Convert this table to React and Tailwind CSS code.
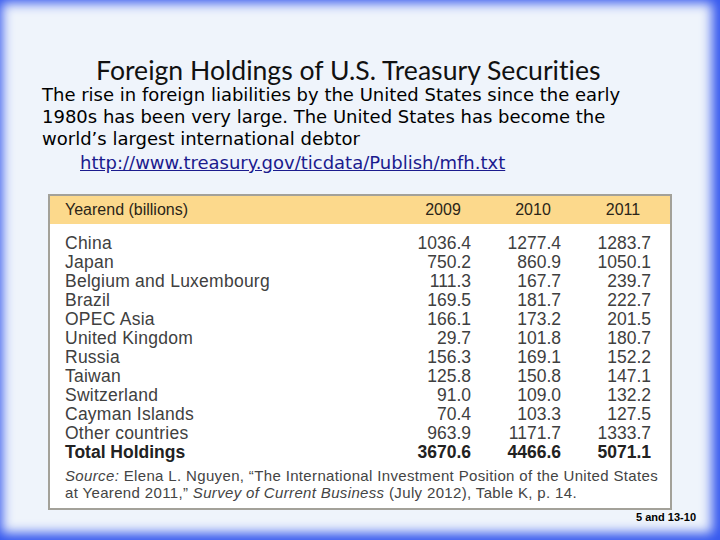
import React from "react";

const rows = [
  ["China", "1036.4", "1277.4", "1283.7"],
  ["Japan", "750.2", "860.9", "1050.1"],
  ["Belgium and Luxembourg", "111.3", "167.7", "239.7"],
  ["Brazil", "169.5", "181.7", "222.7"],
  ["OPEC Asia", "166.1", "173.2", "201.5"],
  ["United Kingdom", "29.7", "101.8", "180.7"],
  ["Russia", "156.3", "169.1", "152.2"],
  ["Taiwan", "125.8", "150.8", "147.1"],
  ["Switzerland", "91.0", "109.0", "132.2"],
  ["Cayman Islands", "70.4", "103.3", "127.5"],
  ["Other countries", "963.9", "1171.7", "1333.7"],
];

// Holdings table, drawn like the scanned textbook figure
function HoldingsTable() {
  return (
    <div className="mx-[48px] mt-[20px] border-2 border-[#a3a199] bg-white font-['Liberation_Sans',Arial,sans-serif] text-[#404040]">
      <div className="grid h-[28px] grid-cols-[1fr_56px_56px_56px] items-center gap-x-[34px] bg-[#fcd98c] pl-[15px] pr-[19px] text-[16px] text-[#2b2518]">
        <span>Yearend (billions)</span>
        <span className="text-center">2009</span>
        <span className="text-center">2010</span>
        <span className="text-center">2011</span>
      </div>
      <div className="pl-[15px] pr-[19px] pt-[10px] text-[17.5px] leading-[19px]">
        {rows.map((r) => (
          <div key={r[0]} className="grid grid-cols-[1fr_56px_56px_56px] gap-x-[34px]">
            <span className="tracking-[0.25px]">{r[0]}</span>
            <span className="text-right">{r[1]}</span>
            <span className="text-right">{r[2]}</span>
            <span className="text-right">{r[3]}</span>
          </div>
        ))}
        <div className="grid grid-cols-[1fr_56px_56px_56px] gap-x-[34px] font-bold text-[#222]">
          <span>Total Holdings</span>
          <span className="text-right">3670.6</span>
          <span className="text-right">4466.6</span>
          <span className="text-right">5071.1</span>
        </div>
      </div>
      <div className="pl-[15px] pt-[5px] pb-[7px] text-[15px] leading-[17px] tracking-[0.35px] text-[#444]">
        <p>
          <i>Source:</i> Elena L. Nguyen, “The International Investment Position of the United States
        </p>
        <p>
          at Yearend 2011,” <i>Survey of Current Business</i> (July 2012), Table K, p. 14.
        </p>
      </div>
    </div>
  );
}

export default function App() {
  return (
    <div className="flex h-[540px] w-[720px] flex-col bg-[#eff4fb] shadow-[inset_-3px_-2px_12px_5px_#3457ee]">
      <h1 className="pl-[96px] pt-[56px] font-['Lato','Noto_Sans',sans-serif] text-[26.6px] leading-[28px] text-[#111] [font-variant-ligatures:none]">
        Foreign Holdings of U.S. Treasury Securities
      </h1>
      <div className="pl-[42px] font-['DejaVu_Sans',Verdana,sans-serif] text-[18px] leading-[22px] text-black">
        <p>
          The rise in foreign liabilities by the United States since the early
          <br />
          1980s has been very large. The United States has become the
          <br />
          world’s largest international debtor
        </p>
        <p className="mt-[2px] pl-[38px]">
          <a href="#" className="text-[#1b1b8e] underline">
            http://www.treasury.gov/ticdata/Publish/mfh.txt
          </a>
        </p>
      </div>
      <HoldingsTable />
      <div className="flex justify-end pr-[24px] pt-0 font-['Liberation_Sans',Arial,sans-serif] text-[11px] font-bold leading-[14px] text-black">
        5 and 13-10
      </div>
    </div>
  );
}
